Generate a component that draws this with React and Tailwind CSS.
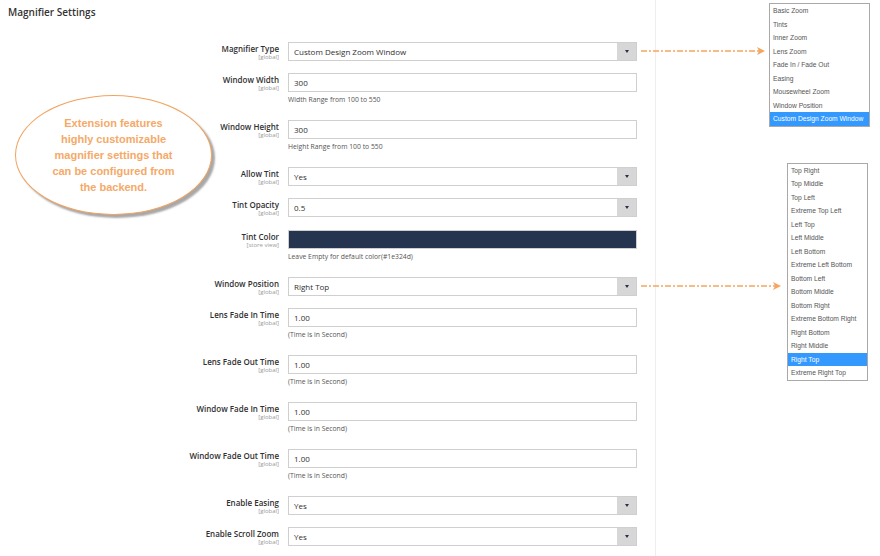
import React from 'react';

const rows = [
  { label: 'Magnifier Type', scope: '[global]', value: 'Custom Design Zoom Window', select: true },
  { label: 'Window Width', scope: '[global]', value: '300', note: 'Width Range from 100 to 550' },
  { label: 'Window Height', scope: '[global]', value: '300', note: 'Height Range from 100 to 550' },
  { label: 'Allow Tint', scope: '[global]', value: 'Yes', select: true },
  { label: 'Tint Opacity', scope: '[global]', value: '0.5', select: true, extra: true },
  { label: 'Tint Color', scope: '[store view]', value: '', color: true, note: 'Leave Empty for default color(#1e324d)' },
  { label: 'Window Position', scope: '[global]', value: 'Right Top', select: true },
  { label: 'Lens Fade In Time', scope: '[global]', value: '1.00', note: '(Time is in Second)' },
  { label: 'Lens Fade Out Time', scope: '[global]', value: '1.00', note: '(Time is in Second)' },
  { label: 'Window Fade In Time', scope: '[global]', value: '1.00', note: '(Time is in Second)' },
  { label: 'Window Fade Out Time', scope: '[global]', value: '1.00', note: '(Time is in Second)' },
  { label: 'Enable Easing', scope: '[global]', value: 'Yes', select: true },
  { label: 'Enable Scroll Zoom', scope: '[global]', value: 'Yes', select: true },
];

const zoomTypes = [
  'Basic Zoom', 'Tints', 'Inner Zoom', 'Lens Zoom', 'Fade In / Fade Out',
  'Easing', 'Mousewheel Zoom', 'Window Position', 'Custom Design Zoom Window',
];

const positions = [
  'Top Right', 'Top Middle', 'Top Left', 'Extreme Top Left', 'Left Top', 'Left Middle',
  'Left Bottom', 'Extreme Left Bottom', 'Bottom Left', 'Bottom Middle', 'Bottom Right',
  'Extreme Bottom Right', 'Right Bottom', 'Right Middle', 'Right Top', 'Extreme Right Top',
];

const Field = ({ row }) => (
  <div className={`flex ${row.extra ? 'mb-[13px]' : 'mb-[12px]'}`}>
    {/* Label */}
    <div className="w-[288px] pr-[9px] pt-[1px] text-right">
      <div className="text-[8px] font-semibold leading-[11px] text-[#303030]">{row.label}</div>
      <div className="text-[6px] leading-[7px] text-[#9a9a9a]">{row.scope}</div>
    </div>

    {/* Control */}
    <div className="w-[349px]">
      {row.color ? (
        <div className="h-[19px] border border-[#cfcfcf] bg-[#26354f]" />
      ) : (
        <div className="h-[19px] border border-[#cfcfcf] flex items-center bg-white">
          <span className="flex-1 pl-[5px] text-[8px] text-[#303030]">{row.value}</span>
          {row.select && (
            <span className="w-[19px] h-full bg-[#d7d7d7] flex items-center justify-center">
              <svg width="4" height="3" viewBox="0 0 4 3">
                <path d="M0 0 L4 0 L2 3 Z" fill="#2a3248" />
              </svg>
            </span>
          )}
        </div>
      )}
      {row.note && (
        <div className="text-[6.8px] leading-[16px] text-[#555]">{row.note}</div>
      )}
    </div>
  </div>
);

const DropList = ({ items, active, className }) => (
  <div className={`border border-[#a9a9a9] bg-white font-['Liberation_Sans',sans-serif] ${className}`}>
    {items.map((item) => (
      <div
        key={item}
        className={`h-[13.5px] leading-[13.5px] pl-[3px] text-[6.7px] whitespace-nowrap ${
          item === active ? 'bg-[#3399ff] text-white' : 'text-[#555]'
        }`}
      >
        {item}
      </div>
    ))}
  </div>
);

export default function App() {
  return (
    <div className="w-[880px] h-[556px] bg-white flex overflow-hidden relative font-['Open_Sans',sans-serif]">
      {/* Settings form */}
      <div className="w-[656px] shrink-0 border-r border-[#eeeeee] relative">
        <h2 className="pl-2 pt-[5px] text-[10px] font-semibold leading-[14px] text-[#333]">Magnifier Settings</h2>
        <div className="mt-[23px]">
          {rows.map((row) => (
            <Field key={row.label} row={row} />
          ))}
        </div>

        {/* Callout bubble */}
        <div className="absolute left-[15px] top-[95px] w-[197px] h-[120px] rounded-[50%] border-[1.5px] border-[#f2a35e] bg-white shadow-[3px_3px_2px_#a8a8a8] flex items-center justify-center">
          <p className="text-center text-[11px] font-bold leading-[16px] text-[#f5a968] font-['Liberation_Sans',sans-serif]">
            Extension features<br />
            highly customizable<br />
            magnifier settings that<br />
            can be configured from<br />
            the backend.
          </p>
        </div>
      </div>

      {/* Dropdown previews */}
      <div className="flex-1">
        <DropList items={zoomTypes} active="Custom Design Zoom Window" className="ml-[113px] mt-[3px] w-[101px]" />
        <DropList items={positions} active="Right Top" className="ml-[131px] mt-[36px] w-[81px]" />
      </div>

      {/* Connector arrows */}
      <svg className="absolute inset-0 pointer-events-none" width="880" height="556">
        <line x1="641" y1="51" x2="760" y2="51" stroke="#f5a55f" strokeWidth="1.5" strokeDasharray="6 2 2 2" />
        <path d="M757 47 L765 51 L757 55 L759 51 Z" fill="#f5a55f" />
        <line x1="641" y1="286" x2="776" y2="286" stroke="#f5a55f" strokeWidth="1.5" strokeDasharray="6 2 2 2" />
        <path d="M773 282 L781 286 L773 290 L775 286 Z" fill="#f5a55f" />
      </svg>
    </div>
  );
}
